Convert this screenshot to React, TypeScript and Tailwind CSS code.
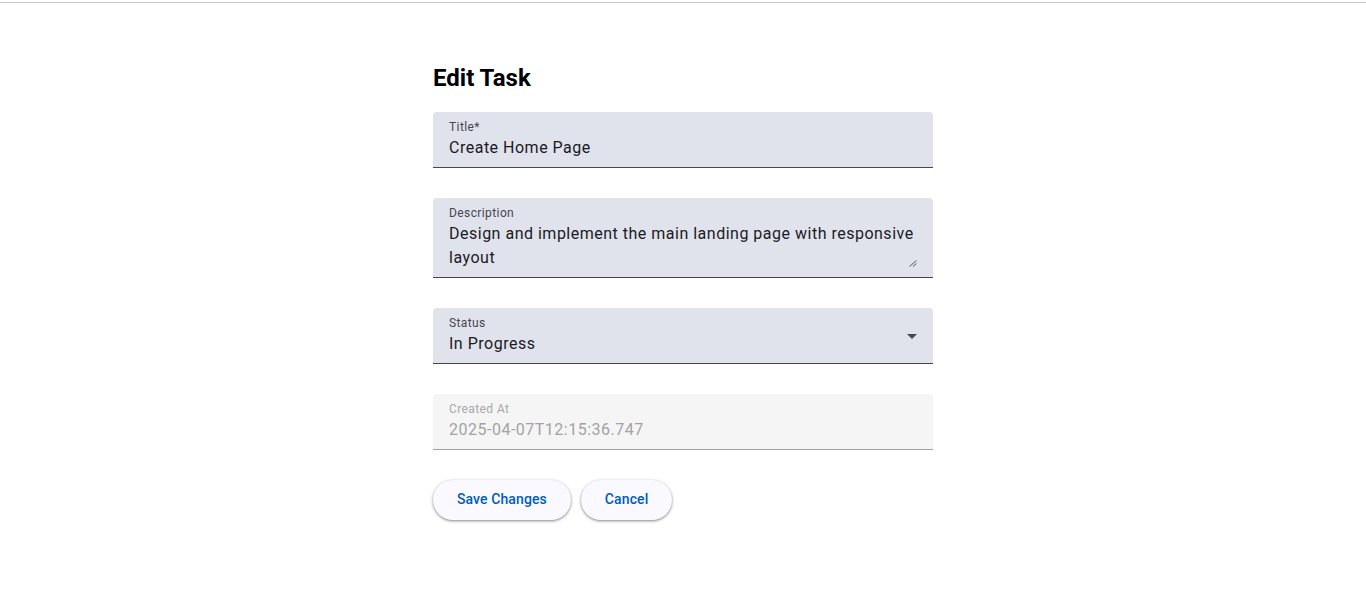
import React from "react";

function Field({
  label,
  children,
  disabled = false,
  className = "",
  right,
}: {
  label: string;
  children: React.ReactNode;
  disabled?: boolean;
  className?: string;
  right?: React.ReactNode;
}) {
  return (
    <div
      className={`relative rounded-t-[4px] border-b px-4 pt-[7px] pb-[7px] ${
        disabled
          ? "bg-[#f5f5f5] border-[#a3a3a6]"
          : "bg-[#e0e2ec] border-[#44474e]"
      } ${className}`}
    >
      <div
        className={`text-[12px] leading-[16px] tracking-[0.4px] ${
          disabled ? "text-[#a8a8ab]" : "text-[#44474e]"
        }`}
      >
        {label}
      </div>
      <div
        className={`mt-[1px] text-[16px] leading-[24px] tracking-[0.5px] ${
          disabled ? "text-[#a3a3a6]" : "text-[#1a1b1f]"
        }`}
      >
        {children}
      </div>
      {right}
    </div>
  );
}

export default function App() {
  return (
    <div
      className="min-h-[599px] bg-white"
      style={{ fontFamily: "Roboto, 'Noto Sans', sans-serif" }}
    >
      <div className="h-[2px]" />
      <div className="h-px bg-[#c6c6e4]" />
      <div className="mx-auto w-[500px] pt-[57px]">
        <h2 className="text-[24px] font-bold leading-[36px] text-black">
          Edit Task
        </h2>
        <div className="mt-[16px] flex flex-col gap-[30px]">
          <Field label="Title*">Create Home Page</Field>
          <Field
            label="Description"
            right={
              <svg
                className="absolute right-[16px] bottom-[10px]"
                width="8"
                height="7"
                viewBox="0 0 8 7"
              >
                <path
                  d="M7.5 0.5 L0.5 6.5 M7.5 3.5 L4 6.5"
                  stroke="#55575c"
                  strokeWidth="1"
                  fill="none"
                />
              </svg>
            }
          >
            Design and implement the main landing page with responsive
            <br />
            layout
          </Field>
          <Field
            label="Status"
            right={
              <svg
                className="absolute right-[16px] top-[26px]"
                width="10"
                height="5"
                viewBox="0 0 10 5"
              >
                <path d="M0 0 L10 0 L5 5 Z" fill="#44474e" />
              </svg>
            }
          >
            In Progress
          </Field>
          <Field label="Created At" disabled>
            2025-04-07T12:15:36.747
          </Field>
          <div className="flex gap-[10px]">
            <button className="h-[40px] rounded-full bg-[#f9f9ff] px-6 pb-[1px] text-[14px] font-medium tracking-[0.1px] text-[#005cbb] shadow-[0_1px_2px_rgba(0,0,0,0.3),0_1px_3px_1px_rgba(0,0,0,0.15)]">
              Save Changes
            </button>
            <button className="h-[40px] rounded-full bg-[#f9f9ff] px-6 pb-[1px] text-[14px] font-medium tracking-[0.1px] text-[#005cbb] shadow-[0_1px_2px_rgba(0,0,0,0.3),0_1px_3px_1px_rgba(0,0,0,0.15)]">
              Cancel
            </button>
          </div>
        </div>
      </div>
    </div>
  );
}
